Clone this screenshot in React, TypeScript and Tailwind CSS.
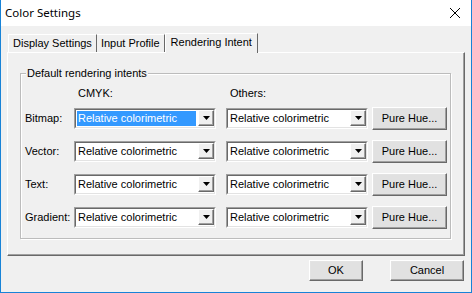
import React from "react"

const rows = ["Bitmap:", "Vector:", "Text:", "Gradient:"]

const font = { fontFamily: '"Liberation Sans", Arial, sans-serif' }

const Arrow = () => (
    <div className="w-[16px] h-[16px] bg-[#f0f0f0] border border-t-white border-l-white border-r-[#696969] border-b-[#696969] shadow-[inset_-1px_-1px_0_#a0a0a0] flex items-center justify-center">
        <svg width="7" height="4" viewBox="0 0 7 4">
            <polygon points="0,0 7,0 3.5,4" fill="#000" />
        </svg>
    </div>
)

const Combo = ({ selected }: { selected?: boolean }) => (
    <div className="w-[142px] h-[21px] bg-white border border-t-[#a0a0a0] border-l-[#a0a0a0] border-r-white border-b-white">
        <div className="h-full flex items-center border border-t-[#696969] border-l-[#696969] border-r-[#e3e3e3] border-b-[#e3e3e3] pl-[1px]">
            <div className={`flex-1 h-[15px] flex items-center pl-[1px] text-[11px] leading-none ${selected ? "bg-[#3399ff] text-white" : "text-black"}`}>
                Relative colorimetric
            </div>
            <div className="ml-[2px]">
                <Arrow />
            </div>
        </div>
    </div>
)

const Button = ({ label, w, h }: { label: string; w: string; h: string }) => (
    <div className={`${w} ${h} bg-[#e1e1e1] border border-t-white border-l-white border-r-[#696969] border-b-[#696969] shadow-[inset_-1px_-1px_0_#a0a0a0,inset_1px_1px_0_#e3e3e3] flex items-center justify-center text-[11px] text-black`}>
        {label}
    </div>
)

export default function App() {
    return (
        <div style={font} className="w-[472px] h-[293px] flex flex-col bg-[#f0f0f0] border-x border-b border-[#1883d7] text-black">
            {/* title bar */}
            <div className="h-[26px] bg-white flex items-center justify-between pl-[4px] pr-[11px]">
                <span className="text-[11.5px]" style={{ fontFamily: '"Noto Sans", "Open Sans", sans-serif' }}>Color Settings</span>
                <svg width="10" height="10" viewBox="0 0 10 10">
                    <path d="M0 0 L10 10 M10 0 L0 10" stroke="#000" strokeWidth="1" />
                </svg>
            </div>

            <div className="pl-[6px] pt-[6px]">
                {/* tabs */}
                <div className="flex items-end h-[20px] relative z-10">
                    <div className="h-[18px] ml-[1px] px-[4px] flex items-center text-[11px] border-t border-l border-t-white border-l-white border-r border-r-[#696969] bg-[#f0f0f0]">Display Settings</div>
                    <div className="h-[18px] px-[4px] flex items-center text-[11px] border-t border-t-white border-r border-r-[#696969] bg-[#f0f0f0]">Input Profile</div>
                    <div className="h-[20px] -mb-[1px] px-[5px] flex items-center text-[11px] border-t border-l border-t-white border-l-white border-r border-r-[#696969] bg-[#f0f0f0] pb-[2px]">Rendering Intent</div>
                </div>

                {/* tab panel */}
                <div className="w-[458px] h-[204px] border border-t-white border-l-white border-r-[#696969] border-b-[#696969] shadow-[inset_-1px_-1px_0_#a0a0a0] pl-[12px] pt-[20px]">
                    <div className="relative w-[431px] h-[166px] border border-[#bcbcbc] shadow-[inset_1px_1px_0_#fff,1px_1px_0_#fff]">
                        <span className="absolute -top-[8px] left-[5px] px-[1px] bg-[#f0f0f0] text-[11px] leading-[14px]">Default rendering intents</span>

                        <div className="pl-[4px] pt-[11px]">
                            <div className="flex h-[16px] items-center text-[11px]">
                                <div className="w-[53px]" />
                                <div className="w-[152px]">CMYK:</div>
                                <div>Others:</div>
                            </div>
                            <div className="flex flex-col gap-[11px] mt-[6px]">
                                {rows.map((r, i) => (
                                    <div key={r} className="flex items-center h-[22px]">
                                        <div className="w-[49px] text-[11px]">{r}</div>
                                        <Combo selected={i === 0} />
                                        <div className="w-[10px]" />
                                        <Combo />
                                        <div className="w-[4px]" />
                                        <Button label="Pure Hue..." w="w-[75px]" h="h-[23px]" />
                                    </div>
                                ))}
                            </div>
                        </div>
                    </div>
                </div>

                {/* footer buttons */}
                <div className="flex justify-end gap-[27px] pr-[7px] pt-[4px]">
                    <Button label="OK" w="w-[54px]" h="h-[21px]" />
                    <Button label="Cancel" w="w-[74px]" h="h-[21px]" />
                </div>
            </div>
        </div>
    )
}
